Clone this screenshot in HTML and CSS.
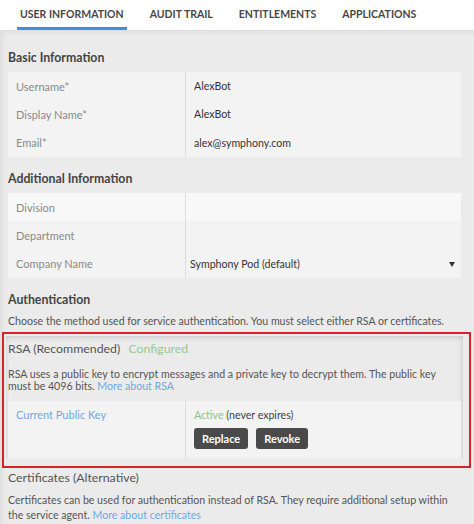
FILE: index.html
```html
<!DOCTYPE html>
<html>
<head>
<meta charset="utf-8">
<link rel="stylesheet" href="styles.css">
</head>
<body>
<nav class="tabs">
  <span class="tab active">USER INFORMATION</span>
  <span class="tab">AUDIT TRAIL</span>
  <span class="tab">ENTITLEMENTS</span>
  <span class="tab">APPLICATIONS</span>
</nav>
<main class="main">
  <h2 class="sec-title">Basic Information</h2>
  <div class="table">
    <div class="row"><div class="label">Username*</div><div class="value">AlexBot</div></div>
    <div class="row"><div class="label">Display Name*</div><div class="value">AlexBot</div></div>
    <div class="row"><div class="label">Email*</div><div class="value">alex@symphony.com</div></div>
  </div>

  <h2 class="sec-title gap">Additional Information</h2>
  <div class="table">
    <div class="row light"><div class="label">Division</div><div class="value"></div></div>
    <div class="row"><div class="label">Department</div><div class="value"></div></div>
    <div class="row"><div class="label">Company Name</div><div class="value select">Symphony Pod (default)<span class="caret"></span></div></div>
  </div>

  <h2 class="sec-title gap">Authentication</h2>
  <p class="desc">Choose the method used for service authentication. You must select either RSA or certificates.</p>

  <section class="rsa">
    <div class="rsa-inner">
      <h3 class="method">RSA (Recommended) <span class="configured">Configured</span></h3>
      <p class="rsa-text">RSA uses a public key to encrypt messages and a private key to decrypt them. The public key must be 4096 bits. <a class="link">More about RSA</a></p>
      <div class="table key-table">
        <div class="row tall">
          <div class="label link-label">Current Public Key</div>
          <div class="value">
            <div class="status"><span class="active">Active</span> (never expires)</div>
            <div class="buttons"><button class="btn">Replace</button><button class="btn">Revoke</button></div>
          </div>
        </div>
      </div>
    </div>
  </section>

  <h3 class="method cert">Certificates (Alternative)</h3>
  <p class="cert-text">Certificates can be used for authentication instead of RSA. They require additional setup within the service agent. <a class="link">More about certificates</a></p>
</main>
</body>
</html>
```
FILE: styles.css
```css
html, body {
  margin: 0;
  padding: 0;
}
body {
  width: 474px;
  height: 524px;
  overflow: hidden;
  background: #ebebeb;
  font-family: Lato, "Open Sans", sans-serif;
  color: #444;
}
.tabs {
  height: 30px;
  background: #fff;
  display: flex;
  padding-left: 17px;
  box-sizing: border-box;
}
.tab {
  font-size: 10.5px;
  font-weight: 700;
  color: #474747;
  padding: 8px 3px 0;
  margin-right: 20px;
  height: 30px;
  box-sizing: border-box;
  white-space: nowrap;
}
.tab.active {
  color: #474747;
  border-bottom: 3px solid #3d8fe0;
}
.main {
  padding: 18px 13px 0 8px;
  box-shadow: inset 3px 3px 4px rgba(0,0,0,0.05);
  min-height: 494px;
  box-sizing: border-box;
}
.sec-title {
  font-size: 12.3px;
  font-weight: 700;
  line-height: 20px;
  margin: 0 0 4px;
  color: #444;
}
.sec-title.gap {
  margin-top: 12px;
}
.table {
  background: #f3f3f3;
}
.row {
  display: grid;
  grid-template-columns: 178px 1fr;
  height: 28.3px;
  font-size: 10.6px;
}
.row.light {
  background: #f8f8f8;
}
.label {
  color: #8a8a8a;
  font-size: 11px;
  padding-left: 8px;
  display: flex;
  align-items: center;
  border-right: 1px solid #dedede;
}
.value {
  color: #333;
  padding-left: 8px;
  display: flex;
  align-items: center;
  position: relative;
}
.value.select {
  padding-left: 4px;
}
.caret {
  position: absolute;
  right: 6px;
  top: 13px;
  width: 0;
  height: 0;
  border-left: 3px solid transparent;
  border-right: 3px solid transparent;
  border-top: 5px solid #333;
}
.desc {
  font-size: 10.6px;
  line-height: 14px;
  margin: 2px 0 0;
  color: #555;
}
.rsa {
  margin: 4px -10px 0 -6px;
  border: 2px solid #d8232a;
  padding: 2px 6px 8px 2px;
}
.rsa-inner {
  padding: 3px 2px 0 2px;
  box-shadow: inset 0 5px 5px -3px rgba(0,0,0,0.12), inset -4px 0 4px -2px rgba(0,0,0,0.08), inset 3px 0 4px -2px rgba(0,0,0,0.06);
}
.method {
  font-size: 12.3px;
  font-weight: 400;
  line-height: 20px;
  margin: 0;
  color: #555;
}
.configured {
  color: #96c98f;
  margin-left: 5px;
}
.rsa-text {
  font-size: 10.6px;
  line-height: 12px;
  margin: 9px 0 9px;
  color: #555;
}
.link {
  color: #6ea7ea;
}
.key-table .row.tall {
  height: 57px;
}
.key-table .label {
  align-items: flex-start;
  padding-top: 7px;
  line-height: 14px;
}
.link-label {
  color: #6ea7ea;
}
.key-table .value {
  flex-direction: column;
  align-items: flex-start;
  justify-content: flex-start;
  padding-top: 7px;
}
.status {
  color: #444;
  line-height: 14px;
}
.active {
  color: #8fc588;
}
.buttons {
  display: flex;
  gap: 8px;
  margin-top: 6px;
}
.btn {
  font-family: Lato, sans-serif;
  font-size: 11px;
  font-weight: 700;
  color: #fff;
  background: #4a4a4a;
  border: none;
  border-radius: 3px;
  height: 21px;
  padding: 0 8px;
}
.method.cert {
  line-height: 20px;
}
.cert-text {
  font-size: 10.6px;
  line-height: 15px;
  margin: 5px 0 0;
  color: #555;
}
```
